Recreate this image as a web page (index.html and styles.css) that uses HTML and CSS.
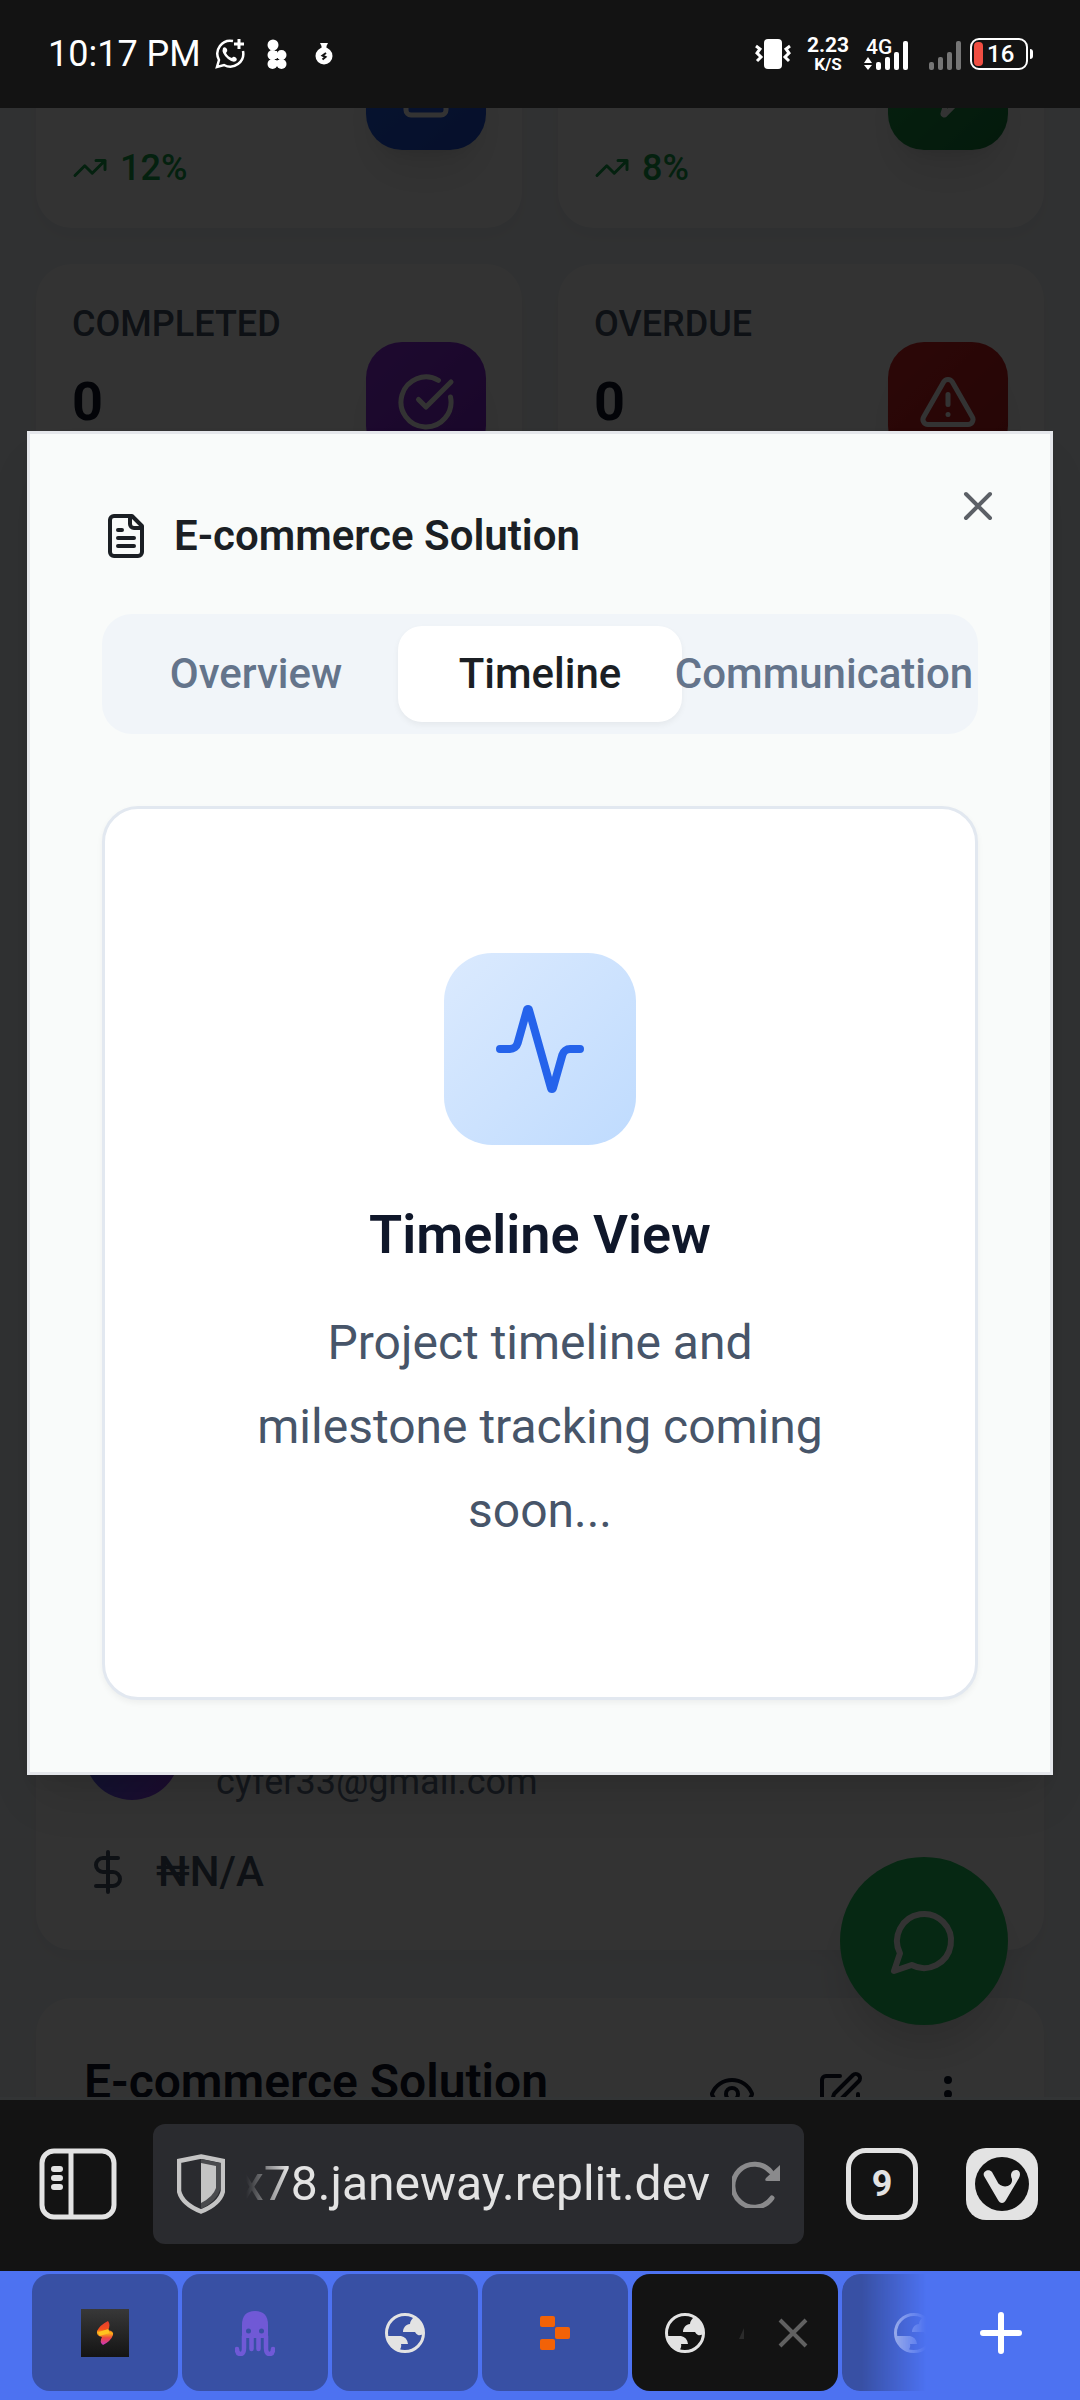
FILE: index.html
```html
<!DOCTYPE html>
<html lang="en">
<head>
<meta charset="utf-8">
<meta name="viewport" content="width=device-width, initial-scale=1">
<title>E-commerce Solution</title>
<link rel="stylesheet" href="styles.css">
</head>
<body>
<svg class="defs" aria-hidden="true">
  <symbol id="trend" viewBox="0 0 24 24"><path d="M22 7l-8.500 8.500-5-5L2 17M16 7h6v6"/></symbol>
  <symbol id="file" viewBox="0 0 24 24"><path d="M15 2H6a2 2 0 0 0-2 2v16a2 2 0 0 0 2 2h12a2 2 0 0 0 2-2V7Z"/><path d="M14 2v4a2 2 0 0 0 2 2h4M10 9H8M16 13H8M16 17H8"/></symbol>
  <symbol id="globe" viewBox="0 0 40 40"><circle cx="20" cy="20" r="18.500" fill="none" stroke="currentColor" stroke-width="3"/><path fill="currentColor" d="M18 19C18 15 21 11 25 11C25 8 27 6 29 4L37 10L39 20Q36 23 33 22Q31 21 30 19ZM2 23H16Q22 24 23 31H16Q17 34 14 38L7 35L2 28Z"/></symbol>
</svg>

<header class="status">
  <div class="status-left">
    <span class="time">10:17 PM</span>
    <svg width="30" height="30" viewBox="0 0 30 30" fill="none" stroke="#fff"><path stroke-width="2.500" d="M18 2A13 13 0 0 0 4 21L2 28L9 26A13 13 0 0 0 28 12"/><path stroke-width="3" d="M24 0v10M19 5h10"/><path fill="#fff" stroke="none" d="M8 9Q10 7 12 10Q13 12 11 14Q13 18 17 19Q18 17 20 18Q23 20 21 22Q18 24 13 20Q6 14 8 9Z"/></svg>
    <svg class="blob" width="20" height="30" viewBox="0 0 20 30" fill="#fff"><circle cx="6" cy="6" r="5.500"/><circle cx="5.500" cy="16" r="5"/><circle cx="14.500" cy="16" r="5"/><circle cx="5.500" cy="25" r="5"/><circle cx="14.500" cy="25" r="5"/><path d="M5 12h5v8H5zM5 14h10v5H5zM5 21h10v6H5z"/><circle cx="10" cy="20.500" r="1" fill="#131313"/></svg>
    <svg class="bag" width="18" height="22" viewBox="0 0 18 22"><path fill="#fff" d="M5 0h8l-1.500 3v2h-5V3Z"/><circle cx="9" cy="13" r="8.500" fill="#fff"/><path d="M11 10L7.500 12.500L10.500 14L7.500 16.500" fill="none" stroke="#131313" stroke-width="2"/></svg>
  </div>
  <div class="status-right">
    <svg width="38" height="30" viewBox="0 0 38 30"><rect x="10" width="18" height="30" rx="4" fill="#fff"/><path d="M2 7L6 10L3 14L7 18L3 22M36 7L32 10L35 14L31 18L35 22" fill="none" stroke="#fff" stroke-width="3"/></svg>
    <div class="speed"><span>2.23</span><small>K/S</small></div>
    <svg class="signal" width="46" height="40" viewBox="0 -4 46 40" fill="#fff"><text x="2" y="16" font-family="Roboto" font-size="21" font-weight="500">4G</text><path d="M0 25L4 19L8 25ZM0 27L4 32L8 27Z"/><rect x="12" y="24" width="5" height="8" rx="2"/><rect x="21" y="19" width="5" height="13" rx="2"/><rect x="30" y="14" width="5" height="18" rx="2"/><rect x="39" y="3" width="5" height="29" rx="2"/></svg>
    <svg class="signal" width="32" height="32" viewBox="0 0 32 32" fill="#757575"><rect y="24" width="5" height="8" rx="2"/><rect x="9" y="19" width="5" height="13" rx="2"/><rect x="18" y="14" width="5" height="18" rx="2"/><rect x="27" y="3" width="5" height="29" rx="2"/></svg>
    <div class="battery"><i></i><span>16</span></div>
    <span class="nub"></span>
  </div>
</header>

<main class="screen">
  <div class="dashboard">
    <section class="stats">
      <article class="card stat">
        <div class="stat-text"><p class="trend"><svg class="icon i36"><use href="#trend"/></svg>12%</p></div>
        <span class="tile blue"><svg class="icon i60"><use href="#file"/></svg></span>
      </article>
      <article class="card stat">
        <div class="stat-text"><p class="trend"><svg class="icon i36"><use href="#trend"/></svg>8%</p></div>
        <span class="tile green"><svg class="icon i60" viewBox="0 0 24 24"><path d="M4 14a1 1 0 0 1-.78-1.630l9.900-10.200a.5.5 0 0 1 .86.46l-1.920 6.020A1 1 0 0 0 13 10h7a1 1 0 0 1 .78 1.630l-9.900 10.200a.5.5 0 0 1-.86-.46l1.920-6.020A1 1 0 0 0 11 14z"/></svg></span>
      </article>
      <article class="card stat top">
        <div class="stat-text"><h3>COMPLETED</h3><p class="count">0</p></div>
        <span class="tile purple"><svg class="icon i60" viewBox="0 0 24 24"><path d="M21.801 10A10 10 0 1 1 17 3.335"/><path d="m9 11 3 3L22 4"/></svg></span>
      </article>
      <article class="card stat top">
        <div class="stat-text"><h3>OVERDUE</h3><p class="count">0</p></div>
        <span class="tile red"><svg class="icon i60" viewBox="0 0 24 24"><path d="m21.730 18-8-14a2 2 0 0 0-3.480 0l-8 14A2 2 0 0 0 4 21h16a2 2 0 0 0 1.730-3M12 9v4M12 17h.01"/></svg></span>
      </article>
    </section>

    <article class="card project current">
      <div class="client"><span class="avatar"></span><p>cyfer33@gmail.com</p></div>
      <p class="budget"><svg class="icon i48" viewBox="0 0 24 24"><path d="M12 2v20M17 5H9.500a3.500 3.500 0 0 0 0 7h5a3.500 3.500 0 0 1 0 7H6"/></svg>₦N/A</p>
    </article>

    <article class="card project next">
      <h2>E-commerce Solution</h2>
      <div class="actions">
        <button type="button" aria-label="View"><svg class="icon i48" viewBox="0 0 24 24"><path d="M2.062 12.348a1 1 0 0 1 0-.696 10.750 10.750 0 0 1 19.876 0 1 1 0 0 1 0 .696 10.750 10.750 0 0 1-19.876 0"/><circle cx="12" cy="12" r="3"/></svg></button>
        <button type="button" aria-label="Edit"><svg class="icon i48" viewBox="0 0 24 24"><path d="M12 3H5a2 2 0 0 0-2 2v14a2 2 0 0 0 2 2h14a2 2 0 0 0 2-2v-7"/><path d="M18.375 2.625a1 1 0 0 1 3 3l-9.013 9.014a2 2 0 0 1-.853.505l-2.873.84a.5.5 0 0 1-.62-.62l.84-2.873a2 2 0 0 1 .506-.852z"/></svg></button>
        <button type="button" aria-label="More"><svg class="icon i48" viewBox="0 0 24 24"><circle cx="12" cy="5" r="1"/><circle cx="12" cy="12" r="1"/><circle cx="12" cy="19" r="1"/></svg></button>
      </div>
    </article>
  </div>

  <button type="button" class="chat" aria-label="Chat"><svg class="icon i72" viewBox="0 0 24 24"><path d="M7.900 20A9 9 0 1 0 4 16.100L2 22Z"/></svg></button>

  <div class="overlay">
    <section class="modal" role="dialog" aria-labelledby="modal-title">
      <h2 class="modal-title" id="modal-title"><svg class="icon i48"><use href="#file"/></svg>E-commerce Solution</h2>
      <div class="tabs" role="tablist">
        <button type="button" role="tab">Overview</button>
        <button type="button" role="tab" class="active" aria-selected="true">Timeline</button>
        <button type="button" role="tab">Communication</button>
      </div>
      <div class="panel">
        <span class="panel-icon"><svg class="icon i96" viewBox="0 0 24 24"><path d="M22 12h-2.480a2 2 0 0 0-1.930 1.460l-2.350 8.360a.25.25 0 0 1-.48 0L9.240 2.180a.25.25 0 0 0-.48 0l-2.350 8.360A2 2 0 0 1 4.490 12H2"/></svg></span>
        <h3>Timeline View</h3>
        <p>Project timeline and milestone tracking coming soon...</p>
      </div>
      <button type="button" class="close" aria-label="Close"><svg class="icon i48" viewBox="0 0 24 24"><path d="M18 6L6 18M6 6l12 12"/></svg></button>
    </section>
  </div>
</main>

<nav class="toolbar">
  <button type="button" aria-label="Panels"><svg width="78" height="72" viewBox="0 0 78 72" fill="none" stroke="#e3e3e3"><rect x="3" y="3" width="72" height="66" rx="12" stroke-width="5"/><path d="M32 3v66" stroke-width="5"/><path d="M15 21h6M15 30h6M15 39h6" stroke-width="6" stroke-linecap="round"/></svg></button>
  <div class="address">
    <svg width="48" height="60" viewBox="0 0 48 60"><path d="M24 2.500L46 7V37Q43 50 24 57.500Q5 50 2 37V7Z" fill="none" stroke="#c4c4c4" stroke-width="4.500"/><path d="M24 5L43 9V36Q40 47 24 55Z" fill="#4a4b4e"/><path d="M24 9L39 12V34Q36 43 24 49Z" fill="#c4c4c4"/></svg>
    <input type="text" value="x78.janeway.replit.dev" aria-label="Address">
    <button type="button" aria-label="Reload"><svg width="48" height="48" viewBox="0 0 48 48"><path d="M39 12A21.500 21.500 0 1 0 40 38" fill="none" stroke="#8a8a8c" stroke-width="5" stroke-linecap="round"/><path d="M48 5V21H35Q32 21 34 18Z" fill="#8a8a8c"/></svg></button>
  </div>
  <button type="button" class="count-btn">9</button>
  <button type="button" aria-label="Vivaldi"><svg width="72" height="72" viewBox="0 0 72 72"><rect width="72" height="72" rx="20" fill="#e3e3e3"/><circle cx="36" cy="36" r="27" fill="#131313"/><path fill="#e3e3e3" d="M18 28C16 23 23 20 26 24L31 33C34 41 47 40 46 31C44 28 45 22 50 22C54 22 55 26 53 30L40 52C38 56 34 56 32 52Z"/></svg></button>
</nav>

<nav class="strip">
  <button type="button" class="tab" aria-label="Tab 1"><svg width="48" height="48" viewBox="0 0 48 48"><defs><linearGradient id="dark" x2="0" y2="1"><stop stop-color="#383838"/><stop offset="1" stop-color="#141414"/></linearGradient><linearGradient id="flame" x2="0" y2="1"><stop stop-color="#e23b2e"/><stop offset=".35" stop-color="#f4511e"/><stop offset=".5" stop-color="#fbb416"/><stop offset=".7" stop-color="#f0483e"/><stop offset="1" stop-color="#c936c4"/></linearGradient></defs><path fill="url(#dark)" d="M0 0h48v48H0z"/><path fill="url(#flame)" d="M27 12Q30 16 27 21Q33 22 32 26Q30 32 22 36Q18 33 21 28Q15 27 16 22Q19 16 27 12Z"/><path d="M18 25L28 22" stroke="#ffc31f" stroke-width="4"/></svg></button>
  <button type="button" class="tab" aria-label="Tab 2"><svg width="40" height="46" viewBox="0 0 40 46"><path fill="#7059d6" d="M7 15Q7 1 20 1T33 15V28H7Z"/><path d="M9 26V38Q9 44 5.500 44T2 39M31 26V38Q31 44 34.500 44T38 39M16.500 26V39M23.500 26V39" fill="none" stroke="#7059d6" stroke-width="4.500" stroke-linecap="round"/><circle cx="13.500" cy="21" r="2.500" fill="#3850a4"/><circle cx="26.500" cy="21" r="2.500" fill="#3850a4"/></svg></button>
  <button type="button" class="tab" aria-label="Tab 3"><svg width="40" height="40"><use href="#globe"/></svg></button>
  <button type="button" class="tab" aria-label="Tab 4"><svg width="30" height="34" viewBox="0 0 30 34" fill="#f26207"><rect width="15" height="11" rx="2"/><rect x="15" y="11" width="15" height="12" rx="2"/><rect y="23" width="15" height="11" rx="2"/></svg></button>
  <div class="tab current-tab">
    <svg width="40" height="40"><use href="#globe"/></svg>
    <svg width="6" height="14" viewBox="0 0 6 14"><path d="M0 13L5 2V13Z" fill="#2b2b2b"/></svg>
    <button type="button" aria-label="Close tab"><svg width="30" height="30" viewBox="0 0 30 30"><path d="M2 2L28 28M28 2L2 28" stroke="#616161" stroke-width="4"/></svg></button>
  </div>
  <div class="tab fading"><svg width="40" height="40"><use href="#globe"/></svg></div>
  <button type="button" class="add" aria-label="New tab"><svg width="42" height="42" viewBox="0 0 42 42"><path d="M21 3v36M3 21h36" stroke="#fff" stroke-width="6" stroke-linecap="round"/></svg></button>
</nav>
</body>
</html>
```

FILE: styles.css
```css
* { box-sizing: border-box; }
body {
  margin: 0;
  height: 100vh;
  display: flex;
  flex-direction: column;
  overflow: hidden;
  background: #131313;
  font-family: Roboto, sans-serif;
}
h2, h3, p { margin: 0; }
button {
  display: grid;
  place-items: center;
  flex: none;
  margin: 0;
  padding: 0;
  border: 0;
  background: none;
  color: inherit;
  font: inherit;
}
svg { display: block; flex: none; }
.defs { position: absolute; width: 0; height: 0; }
.icon {
  fill: none;
  stroke: currentColor;
  stroke-width: 2;
  stroke-linecap: round;
  stroke-linejoin: round;
}
.i36 { width: 36px; height: 36px; }
.i48 { width: 48px; height: 48px; }
.i60 { width: 60px; height: 60px; }
.i72 { width: 72px; height: 72px; }
.i96 { width: 96px; height: 96px; }

/* Status bar */
.status {
  height: 108px;
  flex: none;
  display: flex;
  align-items: center;
  justify-content: space-between;
  padding: 0 48px;
  color: #fff;
}
.status-left, .status-right { display: flex; align-items: center; }
.status-left { gap: 14px; }
.time { font-size: 36px; }
.blob { margin-left: 8px; }
.bag { margin-left: 14px; }
.speed {
  width: 40px;
  margin: 0 16px;
  display: flex;
  flex-direction: column;
  align-items: center;
  font-size: 21px;
  line-height: 20px;
  font-weight: 700;
}
.speed small { font-size: 17px; line-height: 18px; }
.signal { margin-right: 9px; }
.signal + .signal { margin-left: 10px; }
.battery {
  width: 58px;
  height: 32px;
  padding: 2px;
  display: flex;
  align-items: center;
  gap: 4px;
  border: 2px solid #fff;
  border-radius: 9px;
  font-size: 24px;
  line-height: 24px;
  font-weight: 500;
}
.battery i { width: 9px; height: 24px; border-radius: 4px; background: #f04e42; }
.nub { width: 3px; height: 10px; margin: 0 -1px 0 2px; border-radius: 0 3px 3px 0; background: #fff; }

/* Dashboard behind the dialog */
.screen {
  position: relative;
  flex: 1;
  min-height: 0;
  overflow: hidden;
  border-bottom: 3px solid #323435;
  background: #f1f5f9;
  color: #0f172a;
}
.dashboard {
  display: flex;
  flex-direction: column;
  gap: 48px;
  margin-top: -156px;
  padding: 0 36px;
}
.stats { display: grid; grid-template-columns: 1fr 1fr; gap: 36px; }
.card { border-radius: 36px; background: #fff; box-shadow: 0 9px 18px rgba(15, 23, 42, .04); }
.stat {
  min-height: 276px;
  display: flex;
  align-items: center;
  justify-content: space-between;
  padding: 36px;
}
.stat-text {
  align-self: stretch;
  display: flex;
  flex-direction: column;
  justify-content: flex-end;
  gap: 12px;
}
.top .stat-text { justify-content: flex-start; }
.stat h3 { font-size: 36px; line-height: 48px; font-weight: 500; color: #475569; }
.count { font-size: 54px; line-height: 84px; font-weight: 700; }
.trend {
  display: flex;
  align-items: center;
  gap: 12px;
  font-size: 36px;
  line-height: 48px;
  font-weight: 500;
  color: #16a34a;
}
.tile {
  width: 120px;
  height: 120px;
  display: grid;
  place-items: center;
  border-radius: 36px;
  color: #fff;
  box-shadow: 0 30px 45px -9px rgba(0, 0, 0, .1), 0 12px 18px -12px rgba(0, 0, 0, .1);
}
.blue { background: linear-gradient(135deg, #2563eb, #1d4ed8); }
.green { background: linear-gradient(135deg, #22a34a, #15803d); }
.purple { background: linear-gradient(135deg, #9333ea, #7e22ce); }
.red { background: linear-gradient(135deg, #dc2626, #b91c1c); }

.project { padding: 48px; }
.current {
  min-height: 1362px;
  display: flex;
  flex-direction: column;
  justify-content: flex-end;
  gap: 36px;
}
.client { height: 108px; display: flex; align-items: center; gap: 36px; }
.client p { align-self: flex-end; font-size: 36px; line-height: 48px; color: #64748b; }
.avatar {
  width: 96px;
  height: 96px;
  border-radius: 50%;
  background: linear-gradient(135deg, #3b82f6, #9333ea);
}
.budget {
  display: flex;
  align-items: center;
  gap: 24px;
  font-size: 42px;
  line-height: 60px;
  font-weight: 500;
  color: #475569;
}
.next { display: flex; justify-content: space-between; align-items: flex-start; }
.next h2 { font-size: 48px; line-height: 72px; font-weight: 600; }
.actions { display: flex; gap: 12px; }
.actions button { width: 96px; height: 96px; }
.chat {
  position: absolute;
  right: 72px;
  bottom: 72px;
  width: 168px;
  height: 168px;
  border-radius: 50%;
  background: #22c55e;
  color: #fff;
  box-shadow: 0 30px 45px -9px rgba(0, 0, 0, .15);
}

/* Dialog */
.overlay {
  position: absolute;
  inset: 0;
  display: flex;
  align-items: center;
  padding: 0 27px;
  background: rgba(0, 0, 0, .8);
}
.modal {
  position: relative;
  flex: 1;
  min-width: 0;
  padding: 72px;
  border: 3px solid #e5e7eb;
  background: #f9fbfa;
  box-shadow: 0 30px 45px -9px rgba(0, 0, 0, .1), 0 12px 18px -12px rgba(0, 0, 0, .1);
}
.modal-title {
  display: flex;
  align-items: center;
  gap: 24px;
  margin-bottom: 48px;
  font-size: 42px;
  line-height: 60px;
  font-weight: 600;
  color: #1b1f24;
}
.tabs {
  height: 120px;
  display: grid;
  grid-template-columns: repeat(3, minmax(0, 1fr));
  margin-bottom: 72px;
  padding: 12px;
  border-radius: 30px;
  background: #f1f5f9;
  font-size: 42px;
  line-height: 60px;
  font-weight: 500;
  color: #64748b;
}
.tabs button { justify-content: center; border-radius: 24px; white-space: nowrap; }
.tabs .active { background: #fff; color: #1b1f24; box-shadow: 0 3px 6px rgba(0, 0, 0, .05); }
.panel {
  display: flex;
  flex-direction: column;
  align-items: center;
  padding: 144px;
  border: 3px solid #e2e8f0;
  border-radius: 36px;
  background: #fff;
  box-shadow: 0 3px 6px rgba(0, 0, 0, .05);
  text-align: center;
}
.panel-icon {
  width: 192px;
  height: 192px;
  display: grid;
  place-items: center;
  margin-bottom: 48px;
  border-radius: 48px;
  background: linear-gradient(135deg, #dbeafe, #bfdbfe);
  color: #2563eb;
}
.panel h3 { margin-bottom: 24px; font-size: 54px; line-height: 84px; font-weight: 600; color: #0f172a; }
.panel p { font-size: 48px; line-height: 84px; color: #475569; }
.close { position: absolute; top: 48px; right: 48px; color: #5c6066; }

/* Browser toolbar */
.toolbar {
  height: 171px;
  flex: none;
  display: flex;
  align-items: center;
  gap: 42px;
  padding: 0 42px 3px 39px;
  background: #131313;
  color: #e3e3e3;
}
.address {
  flex: 1;
  min-width: 0;
  height: 120px;
  display: flex;
  align-items: center;
  gap: 15px;
  margin-left: -6px;
  padding: 0 24px;
  border-radius: 12px;
  background: #2a2b2f;
}
.address input {
  flex: 1;
  min-width: 0;
  padding: 0;
  border: 0;
  background: none;
  color: #e3e3e3;
  font: 48px/72px Roboto, sans-serif;
  -webkit-mask-image: linear-gradient(90deg, transparent 6px, #000 48px);
  mask-image: linear-gradient(90deg, transparent 6px, #000 48px);
}
.count-btn {
  width: 72px;
  height: 72px;
  border: 5px solid #e3e3e3;
  border-radius: 20px;
  font-size: 36px;
  font-weight: 700;
}
.count-btn + button { margin-left: 6px; }

/* Tab strip */
.strip {
  height: 129px;
  flex: none;
  display: flex;
  gap: 4px;
  padding: 3px 0 9px 32px;
  background: #4d72f1;
}
.tab {
  width: 146px;
  flex: none;
  display: grid;
  place-items: center;
  border-radius: 18px;
  background: #3850a4;
  color: #e3e3e3;
}
.current-tab {
  width: 206px;
  display: flex;
  align-items: center;
  justify-content: space-between;
  padding: 0 30px 0 33px;
  background: #131313;
}
.fading {
  width: 92px;
  overflow: hidden;
  justify-content: end;
  border-radius: 18px 0 0 18px;
  -webkit-mask-image: linear-gradient(90deg, #000 20px, transparent 84px);
  mask-image: linear-gradient(90deg, #000 20px, transparent 84px);
}
.add { margin: 0 58px 0 auto; }
```
